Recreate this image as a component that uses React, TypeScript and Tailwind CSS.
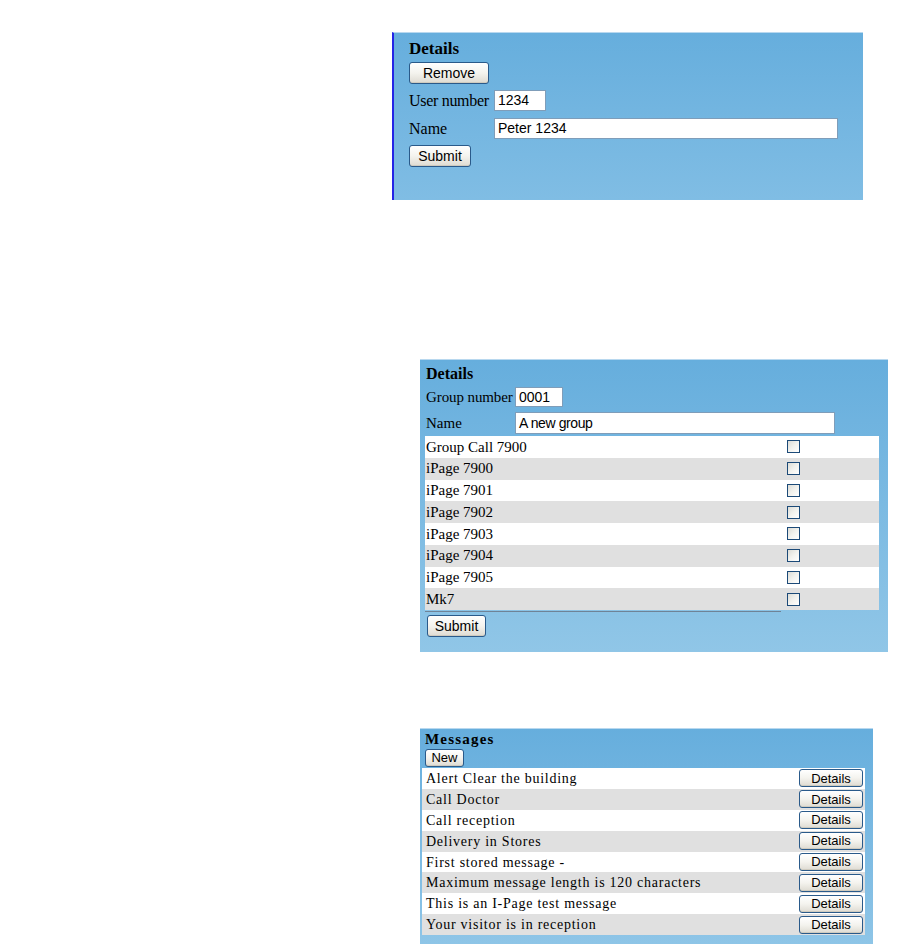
import React from 'react';

const serif = "font-['Liberation_Serif',serif]";
const sans = "font-['Liberation_Sans',Arial,sans-serif]";

const btn =
  `${sans} border border-[#2a5a8a] rounded-[3px] bg-gradient-to-b from-white via-[#f4f3ee] to-[#dedbd2] text-black flex items-center justify-center shadow-[inset_0_-1px_0_#cfcbbf]`;

const input = `${sans} bg-white border border-[#7f9db9] text-black px-[3px] flex items-center`;

const groupItems = [
  'Group Call 7900',
  'iPage 7900',
  'iPage 7901',
  'iPage 7902',
  'iPage 7903',
  'iPage 7904',
  'iPage 7905',
  'Mk7',
];

const messages = [
  'Alert Clear the building',
  'Call Doctor',
  'Call reception',
  'Delivery in Stores',
  'First stored message -',
  'Maximum message length is 120 characters',
  'This is an I-Page test message',
  'Your visitor is in reception',
];

const Checkbox: React.FC = () => (
  <div className="w-[13px] h-[13px] border border-[#1c4a78] bg-gradient-to-br from-[#dcdcd6] via-[#f2f2ee] to-white" />
);

const UserPanel: React.FC = () => (
  <div className="ml-[392px] w-[471px] h-[168px] border-l-2 border-[#2424e6] border-t border-t-[#b8d8ef] bg-gradient-to-b from-[#66aedd] to-[#80bde4] pl-[15px] pt-[6px]">
    <div className={`${serif} font-bold text-[17px] leading-[20px] text-black`}>Details</div>
    <button className={`${btn} mt-[3px] w-[80px] h-[22px] text-[14px]`}>Remove</button>
    <div className="flex items-center mt-[6px]">
      <div className={`${serif} w-[85px] text-[16px] leading-[18px] tracking-[-0.3px] text-black`}>User number</div>
      <div className={`${input} w-[52px] h-[21px] text-[14px]`}>1234</div>
    </div>
    <div className="flex items-center mt-[7px]">
      <div className={`${serif} w-[85px] text-[16px] leading-[18px] text-black`}>Name</div>
      <div className={`${input} w-[344px] h-[21px] text-[14px]`}>Peter 1234</div>
    </div>
    <button className={`${btn} mt-[6px] w-[62px] h-[22px] text-[14px]`}>Submit</button>
  </div>
);

const GroupPanel: React.FC = () => (
  <div className="mt-[159px] ml-[420px] w-[468px] h-[293px] border-t border-t-[#b8d8ef] bg-gradient-to-b from-[#66aedd] to-[#90c6e7] pt-[4px]">
    <div className={`${serif} pl-[6px] font-bold text-[16px] leading-[19px] text-black`}>Details</div>
    <div className="flex items-center mt-[4px] pl-[6px]">
      <div className={`${serif} w-[89px] text-[15px] leading-[18px] tracking-[-0.1px] text-black`}>Group number</div>
      <div className={`${input} w-[48px] h-[20px] text-[14px]`}>0001</div>
    </div>
    <div className="flex items-center mt-[5px] pl-[6px]">
      <div className={`${serif} w-[89px] text-[15px] leading-[18px] text-black`}>Name</div>
      <div className={`${input} w-[320px] h-[22px] text-[14px] tracking-[-0.4px]`}>A new group</div>
    </div>
    <div className="ml-[5px] mt-[2px] w-[454px]">
      {groupItems.map((g, i) => (
        <div
          key={g}
          className={`flex items-center h-[21.75px] ${i % 2 === 0 ? 'bg-white' : 'bg-[#e0e0e0]'}`}
        >
          <div className={`${serif} w-[362px] pl-[1px] text-[15px] text-black`}>{g}</div>
          <Checkbox />
        </div>
      ))}
      <div className="w-[356px] h-[1px] mt-[1px] bg-[#6f8397]" />
    </div>
    <button className={`${btn} ml-[7px] mt-[3px] w-[59px] h-[22px] text-[14px]`}>Submit</button>
  </div>
);

const MessagesPanel: React.FC = () => (
  <div className="mt-[76px] ml-[420px] w-[453px] h-[216px] border-t border-t-[#b8d8ef] bg-gradient-to-b from-[#66aedd] to-[#8ec5e7] pt-[2px]">
    <div className={`${serif} pl-[5px] font-bold text-[15px] leading-[17px] tracking-[1.2px] text-black`}>Messages</div>
    <button className={`${btn} ml-[5px] mt-[1px] w-[39px] h-[18px] text-[13px]`}>New</button>
    <div className="ml-[2px] mt-[1px] w-[443px]">
      {messages.map((m, i) => (
        <div
          key={m}
          className={`flex items-center justify-between h-[20.9px] pr-[2px] ${i % 2 === 0 ? 'bg-white' : 'bg-[#e0e0e0]'}`}
        >
          <div className={`${serif} pl-[4px] text-[14px] tracking-[0.75px] text-black`}>{m}</div>
          <button className={`${btn} w-[64px] h-[18px] text-[13px]`}>Details</button>
        </div>
      ))}
    </div>
  </div>
);

export default function App() {
  return (
    <div className="w-[903px] h-[945px] bg-white pt-[32px] overflow-hidden">
      <UserPanel />
      <GroupPanel />
      <MessagesPanel />
    </div>
  );
}
